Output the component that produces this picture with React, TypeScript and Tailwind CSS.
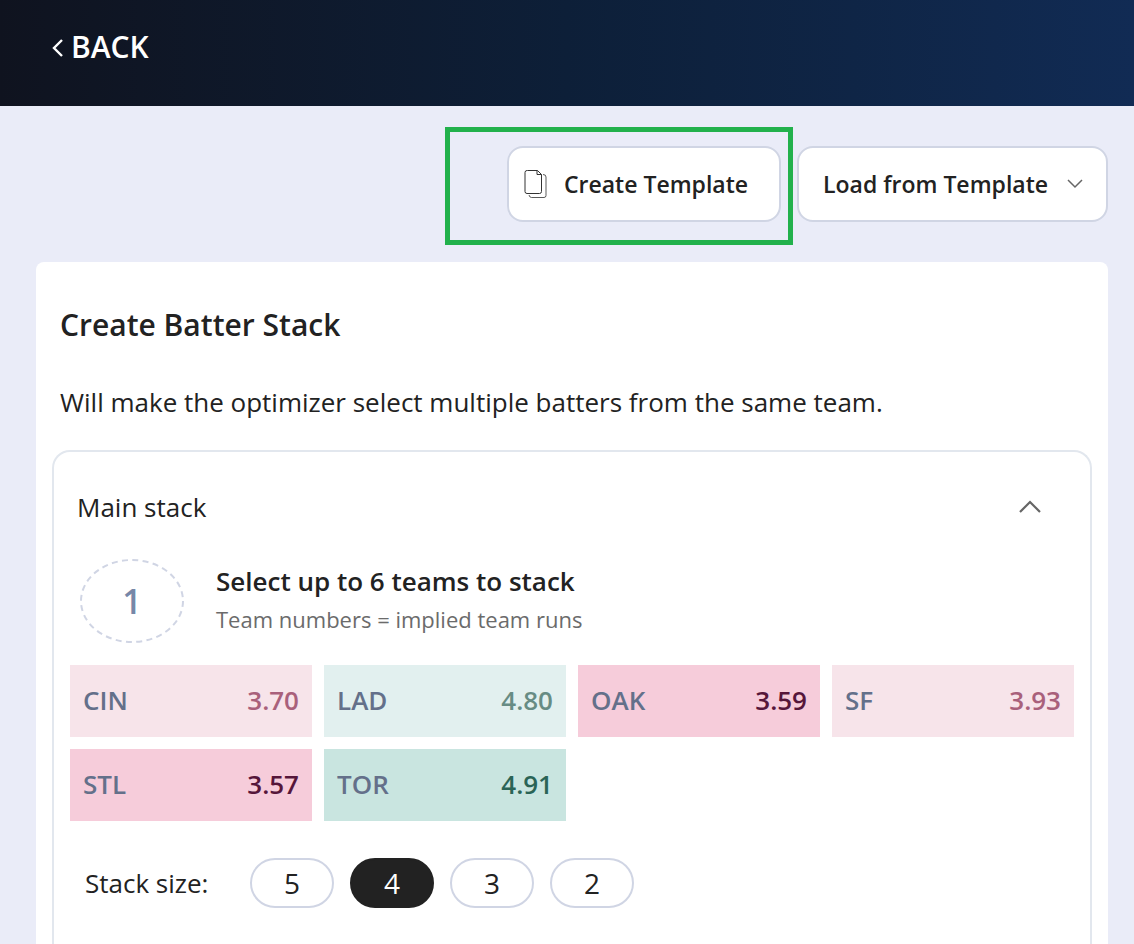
import { useState } from "react";

type Tone = "low" | "lower" | "high" | "higher";

const teams: { name: string; runs: string; tone: Tone }[] = [
  { name: "CIN", runs: "3.70", tone: "low" },
  { name: "LAD", runs: "4.80", tone: "high" },
  { name: "OAK", runs: "3.59", tone: "lower" },
  { name: "SF", runs: "3.93", tone: "low" },
  { name: "STL", runs: "3.57", tone: "lower" },
  { name: "TOR", runs: "4.91", tone: "higher" },
];

const tileTone: Record<Tone, string> = {
  low: "bg-[#f7e4ea]",
  lower: "bg-[#f6ccda]",
  high: "bg-[#e2f0ef]",
  higher: "bg-[#c9e5e0]",
};

const runsTone: Record<Tone, string> = {
  low: "text-[#a9607b]",
  lower: "text-[#56163a]",
  high: "text-[#678c84]",
  higher: "text-[#2a6456]",
};

function PagesIcon() {
  return (
    <svg width="24" height="30" viewBox="0 0 24 30" fill="none" stroke="#333333" aria-hidden="true">
      <path d="M3.500 1.500H13.500L17.500 5.500V22.500A2 2 0 0 1 15.500 24.500H3A2 2 0 0 1 1 22.500V3.500A2 2 0 0 1 3 1.500Z" />
      <path d="M13 1.500V5.500H17.500" />
      <path d="M19 5.500Q22 5.500 22 8V26.500A2 2 0 0 1 20 28.500H7.500Q5.500 28.500 5 26" strokeOpacity="0.8" />
    </svg>
  );
}

function Header() {
  return (
    <header className="flex h-[106px] items-start bg-linear-to-r from-[#0f131f] via-[#0d1f38] to-[#112b54] px-[51px] pt-6">
      <a href="#back" className="flex items-center gap-1.5 text-[30px] leading-[46px] font-semibold text-white">
        <svg width="14" height="20" viewBox="0 0 14 20" fill="none" stroke="currentColor" strokeWidth="2.4" aria-hidden="true">
          <path d="M11 3L3 11L11 19" />
        </svg>
        BACK
      </a>
    </header>
  );
}

function TemplateBar() {
  return (
    <div className="flex items-start justify-end gap-1">
      <div className="border-5 border-[#22b14c] pt-3.5 pr-[7px] pb-[18px] pl-[57px]">
        <button
          type="button"
          className="flex h-19 w-[274px] items-center gap-4 rounded-2xl border-2 border-[#d0d5e4] bg-white pl-[15px] text-[23px] font-semibold"
        >
          <PagesIcon />
          Create Template
        </button>
      </div>
      <div className="relative mt-[19px]">
        <select
          aria-label="Load from Template"
          className="h-19 w-[311px] appearance-none rounded-2xl border-2 border-[#d0d5e4] bg-white pr-14 pl-6 text-[23px] font-semibold"
        >
          <option>Load from Template</option>
        </select>
        <svg
          className="pointer-events-none absolute top-8 right-6"
          width="18"
          height="12"
          viewBox="0 0 18 12"
          fill="none"
          stroke="#666666"
          strokeWidth="1.5"
          aria-hidden="true"
        >
          <path d="M2 2L9 9L16 2" />
        </svg>
      </div>
    </div>
  );
}

function StackSize() {
  const [size, setSize] = useState(4);
  return (
    <div role="group" aria-labelledby="stack-size" className="mt-[37px] flex items-center gap-4 pl-[15px]">
      <span id="stack-size" className="w-[149px]">
        Stack size:
      </span>
      {[5, 4, 3, 2].map((n) => (
        <button
          key={n}
          type="button"
          aria-pressed={n === size}
          onClick={() => setSize(n)}
          className={
            n === size
              ? "h-[50px] w-21 rounded-[25px] border-2 border-[#222222] bg-[#222222] text-[28px] leading-[46px] text-white"
              : "h-[50px] w-21 rounded-[25px] border-2 border-[#d0d5e4] bg-white text-[28px] leading-[46px]"
          }
        >
          {n}
        </button>
      ))}
    </div>
  );
}

function MainStack() {
  return (
    <section className="mt-7 rounded-t-[18px] border-2 border-b-0 border-[#e2e7ee] px-4 pt-8 pb-20">
      <div className="flex h-[46px] items-center justify-between pr-8 pl-[7px]">
        <h2>Main stack</h2>
        <button type="button" aria-label="Collapse main stack">
          <svg width="24" height="16" viewBox="0 0 24 16" fill="none" stroke="#666666" strokeWidth="2.2" aria-hidden="true">
            <path d="M2 13L12 3L22 13" />
          </svg>
        </button>
      </div>

      <div className="mt-[29px] flex items-start gap-8 pl-2.5">
        <div className="relative flex h-21 w-26 items-center justify-center text-[34px] font-semibold text-[#7787a8]">
          <svg className="absolute inset-0" width="104" height="84" viewBox="0 0 104 84" fill="none" aria-hidden="true">
            <ellipse cx="52" cy="42" rx="51" ry="41" stroke="#d0d5e4" strokeWidth="2" strokeDasharray="6 4.350" />
          </svg>
          1
        </div>
        <div className="pt-0.5">
          <h3 className="leading-10 font-semibold">Select up to 6 teams to stack</h3>
          <p className="text-[22px] leading-9 text-[#6b6b6b]">Team numbers = implied team runs</p>
        </div>
      </div>

      <div className="mt-[22px] grid grid-cols-4 gap-3">
        {teams.map((t) => (
          <button
            key={t.name}
            type="button"
            className={`flex h-18 items-center justify-between px-[13px] pb-0.5 font-semibold ${tileTone[t.tone]}`}
          >
            <span className="text-[#64708a]">{t.name}</span>
            <span className={runsTone[t.tone]}>{t.runs}</span>
          </button>
        ))}
      </div>

      <StackSize />
    </section>
  );
}

export default function App() {
  return (
    <div className="h-screen overflow-hidden bg-[#eaecf8] font-['Open_Sans',sans-serif] text-[26px] text-[#222222]">
      <Header />
      <main className="pt-[21px] pr-[26px] pl-9">
        <TemplateBar />
        <div className="mt-[17px] rounded-t-lg bg-white px-4 pt-10">
          <h1 className="px-2 text-[30px] leading-[46px] font-semibold">Create Batter Stack</h1>
          <p className="mt-[34px] px-2 leading-10">
            Will make the optimizer select multiple batters from the same team.
          </p>
          <MainStack />
        </div>
      </main>
    </div>
  );
}
